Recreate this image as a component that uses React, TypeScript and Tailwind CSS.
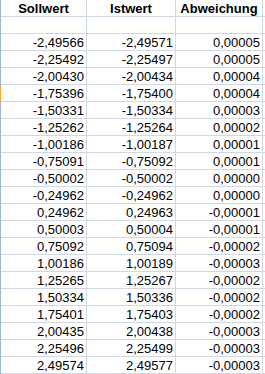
import React from "react";

const rows: [string, string, string][] = [
  ["-2,49566", "-2,49571", "0,00005"],
  ["-2,25492", "-2,25497", "0,00005"],
  ["-2,00430", "-2,00434", "0,00004"],
  ["-1,75396", "-1,75400", "0,00004"],
  ["-1,50331", "-1,50334", "0,00003"],
  ["-1,25262", "-1,25264", "0,00002"],
  ["-1,00186", "-1,00187", "0,00001"],
  ["-0,75091", "-0,75092", "0,00001"],
  ["-0,50002", "-0,50002", "0,00000"],
  ["-0,24962", "-0,24962", "0,00000"],
  ["0,24962", "0,24963", "-0,00001"],
  ["0,50003", "0,50004", "-0,00001"],
  ["0,75092", "0,75094", "-0,00002"],
  ["1,00186", "1,00189", "-0,00003"],
  ["1,25265", "1,25267", "-0,00002"],
  ["1,50334", "1,50336", "-0,00002"],
  ["1,75401", "1,75403", "-0,00002"],
  ["2,00435", "2,00438", "-0,00003"],
  ["2,25496", "2,25499", "-0,00003"],
  ["2,49574", "2,49577", "-0,00003"],
];

function Row({
  cells,
  header,
  selected,
}: {
  cells: [string, string, string];
  header?: boolean;
  selected?: boolean;
}) {
  const widths = ["w-[86px]", "w-[89px]", "w-[87px]"];
  return (
    <div className="flex h-[17px]">
      <div className={selected ? "w-px bg-[#f5a33c]" : "w-px bg-[#9eb6ce]"} />
      {cells.map((c, i) => (
        <div
          key={i}
          className={`${widths[i]} h-[17px] border-r border-b border-[#d0d7e5] flex items-center leading-none ${
            header ? "justify-center font-bold" : "justify-end pr-[2px]"
          }`}
        >
          {c}
        </div>
      ))}
      <div className="flex-1 h-[17px] border-b border-[#d0d7e5]" />
    </div>
  );
}

export default function App() {
  return (
    <div
      className="w-[265px] h-[374px] bg-white text-black text-[13px] overflow-hidden"
      style={{ fontFamily: '"Liberation Sans", Arial, sans-serif' }}
    >
      <Row cells={["Sollwert", "Istwert", "Abweichung"]} header />
      <Row cells={["", "", ""]} />
      {rows.map((r, i) => (
        <Row key={i} cells={r} selected={i === 3} />
      ))}
    </div>
  );
}
